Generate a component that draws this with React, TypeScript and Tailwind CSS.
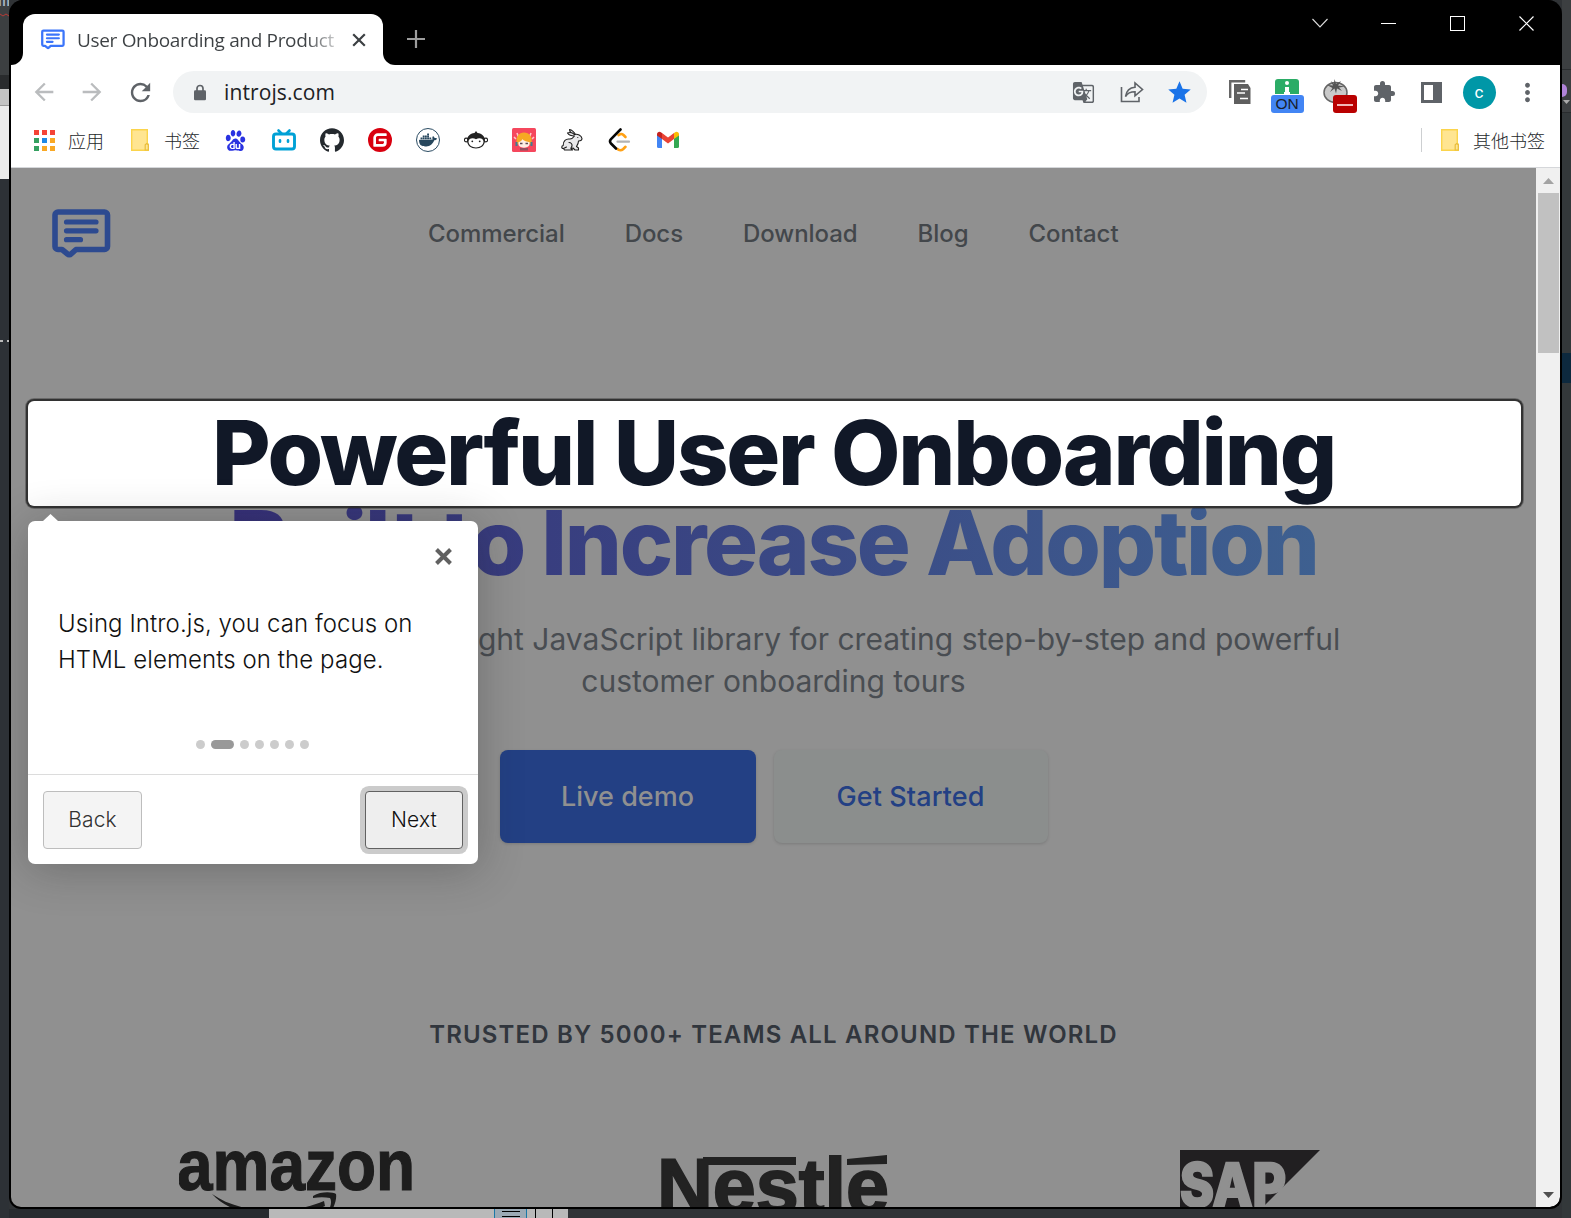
import React from 'react';
import { SiBaidu, SiGithub, SiGitee, SiDocker } from 'react-icons/si';
import { MdArrowBack, MdArrowForward, MdRefresh, MdGTranslate, MdStar, MdExtension, MdMoreVert } from 'react-icons/md';

const Logo = ({ className, color }: { className: string; color: string }) => (
  <svg viewBox="0 0 59 50" className={className} fill="none" stroke={color} strokeWidth="5.6" strokeLinecap="round" strokeLinejoin="round">
    <path d="M6 3h46.500a3 3 0 0 1 3 3v31.500a3 3 0 0 1-3 3H24l-5 4.500a2.500 2.500 0 0 1-3.500 0L10 40.500H6a3 3 0 0 1-3-3V6a3 3 0 0 1 3-3z" />
    <path strokeWidth="5.200" d="M14.500 13h29.500M14.500 21.800h29.500M14.500 30.700h14" />
  </svg>
);

const Folder = () => (
  <svg viewBox="0 0 18 22" className="h-[22px] w-[18px]">
    <path d="M.7.7h15.600v13.500l1 1v6.100H.7z" fill="#ffe591" stroke="#fbd44c" strokeWidth="1.400" />
    <path d="M14.200 21v-5.200l1.500-1.200 1.600 1.200V21z" fill="#ffe591" stroke="#e9bd3a" strokeWidth="1.200" />
  </svg>
);

const appColors = ['#f44336', '#f44336', '#f44336', '#34a060', '#1e88e5', '#f9a825', '#34a060', '#f9a825', '#f9a825'];

const Bili = () => (
  <svg viewBox="0 0 24 24" className="size-6" fill="none" stroke="#00a1d6" strokeWidth="2.900" strokeLinecap="round">
    <rect x="1.500" y="6" width="21" height="15" rx="2.500" />
    <path d="M6.500 2.500l3 3M17.500 2.500l-3 3M8 12.300v1.500M16 12.300v1.500" strokeWidth="2.600" />
  </svg>
);
const Monkey = () => (
  <svg viewBox="0 0 24 24" className="size-6">
    <circle cx="2.300" cy="12" r="1.900" fill="#fff" stroke="#222" strokeWidth="1.100" />
    <circle cx="21.700" cy="12" r="1.900" fill="#fff" stroke="#222" strokeWidth="1.100" />
    <path d="M12 3l1.500 2c4.500.4 7.500 3.500 7.500 7.500 0 5-4 8-9 8s-9-3-9-8C3 8.500 6 5.400 10.500 5z" fill="#222" />
    <path d="M12 11.300c2.500-2 7.500-1.500 7.500 2.300 0 3.900-3.800 5.900-7.500 5.900s-7.500-2-7.500-5.900c0-3.800 5-4.300 7.500-2.300z" fill="#fff" />
    <circle cx="8.300" cy="13.300" r=".9" fill="#222" /><circle cx="15.700" cy="13.300" r=".9" fill="#222" />
  </svg>
);
const Anime = () => (
  <svg viewBox="0 0 24 24" className="size-6">
    <rect width="24" height="24" rx="1.500" fill="#f5475d" />
    <path d="M5 5l1.500 4M19 5l-1.500 4M2 9l2 2M22 9l-2 2" stroke="#ffc4c8" strokeWidth="1.600" />
    <path d="M5 16C3 9 7 4.500 12 4.500s9.500 4.500 7 11.500z" fill="#f6a823" />
    <path d="M6.500 14c2 0 3.500-1.500 4-3 1 2 5 3 7 3v3c-2 3.500-9 3.500-11 0z" fill="#fdeee4" />
    <path d="M8 15.500h2.500M13.500 15.500H16" stroke="#5b4a52" strokeWidth="1.500" />
    <path d="M4.500 14v4M19.500 14v4" stroke="#3e7d90" strokeWidth="2" />
    <path d="M8 20h8v2.500H8z" fill="#94505f" />
  </svg>
);
const Bunny = () => (
  <svg viewBox="0 0 24 24" className="size-6" fill="#e8e8ea" stroke="#1c1c1c" strokeWidth="1.100" strokeLinejoin="round" strokeLinecap="round">
    <path d="M14.500 7.500C12 6 9.500 3.500 9.500 1.500c2.500.5 4.500 2.500 6 5" />
    <path d="M14.500 8C11 8 8.500 6.500 7.500 5c2.500-1 5.500 0 7 1.500 3-1 7 1 7.500 4 0 1.700-1.500 2.500-3.500 2.500 0 2.500-1 4-2 5.500l2 1.500v2h-3.500L13 20l-2 .5 1.500 1.500H4.500l-1-1.500c-2 .5-2.500-2.500-.3-3C3 13 6 10.500 9.500 11c2 .3 3.500-1 5-3z" />
    <path d="M9 14.500c2 0 3.300 1.500 3 3.500l-1 2M3.500 20.500l3-1.500" fill="none" />
    <circle cx="17.800" cy="9.500" r=".6" fill="#1c1c1c" stroke="none" />
  </svg>
);
const Leet = () => (
  <svg viewBox="0 0 24 24" className="size-6" fill="none" strokeWidth="2.600" strokeLinecap="round" strokeLinejoin="round">
    <path d="M10.500 7.200l1.500-.9c1.500-.6 2.500-.2 3.500.7l2 2M9.500 21c1.500 1.500 4 1.500 5.500.2l2.500-2.400" stroke="#ffa116" />
    <path d="M12.500 1.500L3 11.200c-1.200 1.300-1.200 3 0 4.300l5 5" stroke="#070706" />
    <path d="M9.500 13.700h11.500" stroke="#b3b3b3" strokeWidth="2.200" />
  </svg>
);
const Gmail = () => (
  <svg viewBox="0 0 24 24" className="size-6">
    <path d="M1 6v12.500a1.500 1.500 0 0 0 1.500 1.500H6V10z" fill="#4285f4" />
    <path d="M23 6v12.500a1.500 1.500 0 0 1-1.500 1.500H18V10z" fill="#34a853" />
    <path d="M1 6.500C1 4 3.500 3.200 5.200 4.400L6 5v6L1 7.500z" fill="#c5221f" />
    <path d="M23 6.500C23 4 20.500 3.200 18.800 4.400L18 5v6l5-3.500z" fill="#fbbc04" />
    <path d="M6 5l6 4.600L18 5v6l-6 4.500L6 11z" fill="#ea4335" />
  </svg>
);

const Slot = ({ children }: { children: React.ReactNode }) => <div className="flex w-12 shrink-0 items-center justify-center">{children}</div>;

const TabStrip = () => (
  <div className="flex h-[65px] shrink-0 items-start rounded-tr-[14px] bg-black">
    <div className="flex items-end pt-[14px]">
      <div className="size-3 bg-white"><div className="size-3 rounded-br-[12px] bg-black" /></div>
      <div className="flex h-[51px] w-[360px] items-center rounded-t-[12px] bg-white pl-[18px] pr-[17px]">
        <Logo className="h-[21px] w-6" color="#3b75fa" />
        <span className="ml-3 w-[259px] whitespace-nowrap bg-linear-to-r from-[#3c4043] from-88% to-[#3c404340] bg-clip-text pt-px font-['Open_Sans','Noto_Sans',sans-serif] text-[19px] tracking-[-0.330px] text-transparent">User Onboarding and Product</span>
        <svg viewBox="0 0 14 14" className="ml-[16px] size-[14px] shrink-0" stroke="#3c4043" strokeWidth="2.200"><path d="M1.200 1.200l11.600 11.600M12.800 1.200L1.200 12.800" /></svg>
      </div>
      <div className="size-3 bg-white"><div className="size-3 rounded-bl-[12px] bg-black" /></div>
    </div>
    <svg viewBox="0 0 18 18" className="ml-3 mt-[30px] size-[18px]" stroke="#9d9d9d" strokeWidth="2.200"><path d="M9 0v18M0 9h18" /></svg>
    <div className="-mr-px ml-auto flex h-[46px] text-white">
      <div className="flex w-[69px] items-center justify-center"><svg viewBox="0 0 16 10" className="h-[10px] w-4" fill="none" stroke="#ddd" strokeWidth="1.100"><path d="M.5 1L8 9l7.500-8" /></svg></div>
      <div className="flex w-[69px] items-center justify-center"><div className="h-px w-[15px] bg-white" /></div>
      <div className="flex w-[69px] items-center justify-center"><div className="size-[15px] border border-white" /></div>
      <div className="flex w-[69px] items-center justify-center"><svg viewBox="0 0 15 15" className="size-[15px]" stroke="#fff" strokeWidth="1.200"><path d="M.5.5l14 14M14.500.5l-14 14" /></svg></div>
    </div>
  </div>
);

const Toolbar = () => (
  <div className="flex h-[54px] shrink-0 items-center bg-white pl-[9px] text-[#5f6368]">
    <Slot><MdArrowBack className="size-[28px] text-[#babcbe]" /></Slot>
    <Slot><MdArrowForward className="size-[28px] text-[#babcbe]" /></Slot>
    <Slot><MdRefresh className="size-[29px]" /></Slot>
    <div className="ml-[9px] flex h-[42px] w-[1034px] items-center rounded-full bg-[#f1f3f4] pl-[21px] pr-1">
      <svg viewBox="0 0 12 17" className="h-[17px] w-3"><path d="M3 7V4.500a3 3 0 0 1 6 0V7" fill="none" stroke="#5f6368" strokeWidth="1.700" /><rect y="6.300" width="12" height="10" rx="1.300" fill="#5f6368" /></svg>
      <span className="ml-[18px] font-['Open_Sans','Noto_Sans',sans-serif] text-[21px] leading-none tracking-[0.100px] text-[#202124]">introjs.com</span>
      <div className="ml-auto flex">
        <Slot><MdGTranslate className="size-[23px]" /></Slot>
        <Slot><svg viewBox="0 0 24 22" className="ml-[2px] h-[22px] w-6" fill="none" stroke="#5f6368" strokeWidth="1.600"><path d="M1.500 6v14.500h17.500V16M5.500 15.500C6.500 9 10 6.500 15 6.200V2l7.500 6.500-7.500 6.300v-4.100c-4.500 0-7.500 1.300-9.500 4.800z" /></svg></Slot>
        <Slot><MdStar className="size-[27px] text-[#1a73e8]" /></Slot>
      </div>
    </div>
    <div className="ml-2 flex">
      <Slot><svg viewBox="0 0 22 24" className="ml-px h-6 w-[22px]"><path d="M1.200 18V1.200h15" fill="none" stroke="#666" strokeWidth="2.400" /><path d="M5 4h14l2.500 4v16H5z" fill="#5f5f5f" /><path d="M12 9.500h7M8 13h8M11 18.500h8" stroke="#fff" strokeWidth="1.700" /></svg></Slot>
      <Slot>
        <div className="mt-2 flex h-[34px] flex-col items-center">
          <div className="mb-px flex h-[15px] w-6 shrink-0 flex-col items-center rounded-t-[3px] bg-[#2bac66] pt-[2px]"><div className="size-[4px] rounded-full bg-white" /><div className="mt-[2px] h-[5px] w-1 bg-white" /><div className="h-[2px] w-[6px] bg-white" /></div>
          <div className="flex h-[18px] w-[33px] shrink-0 items-center justify-center rounded-[3px] bg-[#4285f4] font-['Liberation_Sans',sans-serif] text-[15.500px] leading-none text-[#18202c]">ON</div>
        </div>
      </Slot>
      <Slot>
        <div className="relative ml-[9px] mt-2 h-[34px] w-[34px]">
          <svg viewBox="0 0 26 24" className="h-6 w-[26px]"><ellipse cx="12.500" cy="13.500" rx="11.500" ry="10" fill="#c9c9c9" stroke="#666" strokeWidth="1.500" /><path d="M4 6l6 .5L8 2l3 3 .5-5L13 5l5-3-3 4.500 7 1-6 1 3 3.500-5-2.500-1 5-1.500-5L7 13l2.500-4z" fill="#555" /></svg>
          <div className="absolute bottom-0 right-0 flex h-[18px] w-6 items-center justify-center rounded-[3px] bg-[#b90000]"><div className="mt-[2px] h-[1.500px] w-4 bg-[#f1b8b8]" /></div>
        </div>
      </Slot>
      <Slot><MdExtension className="ml-px size-6" /></Slot>
      <Slot><div className="h-[21px] w-[21px] border-y-3 border-l-3 border-r-[9px] border-[#5f6368]" /></Slot>
      <Slot><div className="flex size-[33px] items-center justify-center rounded-full bg-[#0097a7] font-['Roboto',sans-serif] text-[17px] leading-none text-white">c</div></Slot>
      <Slot><MdMoreVert className="size-[29px]" /></Slot>
    </div>
  </div>
);

const Bookmarks = () => (
  <div className="flex h-[49px] shrink-0 items-center border-b border-[#d5d7da] bg-white pb-[6px] font-['Noto_Sans_CJK_SC',sans-serif] text-[18px] font-light text-[#25282b]">
    <div className="ml-[23px] grid grid-cols-3 gap-[3px]">{appColors.map((c, i) => <div key={i} className="size-[5px]" style={{ background: c }} />)}</div>
    <span className="ml-[13px] mt-px">应用</span>
    <div className="ml-[27px]"><Folder /></div>
    <span className="ml-[15px] mt-px">书签</span>
    <div className="ml-3 flex">
      <Slot><SiBaidu className="-ml-px size-[21px] text-[#2932e1]" /></Slot>
      <Slot><Bili /></Slot>
      <Slot><SiGithub className="size-6 text-[#24292e]" /></Slot>
      <Slot><SiGitee className="size-6 text-[#d9000f]" /></Slot>
      <Slot><div className="flex size-6 items-center justify-center rounded-full border-[1.500px] border-[#2b4c63]"><SiDocker className="size-[18px] text-[#27475d]" /></div></Slot>
      <Slot><Monkey /></Slot>
      <Slot><Anime /></Slot>
      <Slot><Bunny /></Slot>
      <Slot><Leet /></Slot>
      <Slot><Gmail /></Slot>
    </div>
    <div className="ml-auto mr-[19px] h-6 w-px bg-[#cdcfd1]" />
    <Folder />
    <span className="ml-[14px] mr-[15px] mt-px">其他书签</span>
  </div>
);

const Tooltip = () => (
  <div className="absolute left-[17px] top-[353px] z-20 flex h-[343px] w-[450px] flex-col rounded-[7px] bg-white shadow-[0_5px_45px_rgba(33,33,33,0.3)]">
    <div className="absolute -top-[7px] left-[15px] h-[7px] w-[15px] bg-white [clip-path:polygon(50%_0,100%_100%,0_100%)]" />
    <div className="flex h-[82px] justify-end pr-[26px] pt-[27px]">
      <svg viewBox="0 0 17 17" className="size-[17px]" stroke="#616161" strokeWidth="4"><path d="M1.500 1.500l14 14M15.500 1.500l-14 14" /></svg>
    </div>
    <div className="whitespace-pre px-[30px] pt-[3px] text-[24px] font-light leading-[36px] tracking-[0.080px] text-[#111]">{'Using Intro.js, you can focus on\nHTML elements on the page.'}</div>
    <div className="mt-auto flex h-[60px] items-start justify-center gap-[6px] pr-px pt-[26px]">
      <i className="size-[9px] rounded-full bg-[#ccc]" />
      <i className="h-[9px] w-[23px] rounded-full bg-[#999]" />
      {[0, 1, 2, 3, 4].map((i) => <i key={i} className="size-[9px] rounded-full bg-[#ccc]" />)}
    </div>
    <div className="flex h-[90px] items-start justify-between border-t border-[#dcdcdc] px-[15px] pt-4 text-[21px] font-[350] tracking-[0.150px] [text-shadow:1.500px_1.500px_0_#fff]">
      <div className="flex h-[58px] w-[99px] items-center justify-center rounded-[4px] border border-[#bdbdbd] bg-[#f4f4f4] text-[#333]">Back</div>
      <div className="flex h-[58px] w-[98px] items-center justify-center rounded-[4px] border border-[#616161] bg-[#eee] text-[#111] shadow-[0_0_0_5px_#cbcbcb]">Next</div>
    </div>
  </div>
);

const Page = () => (
  <div className="relative h-full w-[1525px] overflow-hidden bg-[#909090] font-['Inter',sans-serif]">
    <header className="flex h-[233px] items-start pl-[41px] pt-[41px]">
      <Logo className="h-[50px] w-[59px]" color="#2d4a90" />
      <nav className="ml-[317px] flex h-[50px] items-center gap-[60px] text-[24px] font-medium tracking-[-0.060px] text-[#43474b]">
        <span>Commercial</span><span>Docs</span><span>Download</span><span>Blog</span><span>Contact</span>
      </nav>
    </header>
    <h1 className="text-center text-[90px] font-extrabold leading-[90px] tracking-[-0.025em]">
      <span className="relative z-10 ml-[17px] block h-[105px] w-[1493px] rounded-[6px] bg-white pr-[2px] pt-[7px] text-[#111827] shadow-[0_0_0_2px_rgba(44,44,44,0.900),0_0_0_3px_rgba(33,33,33,0.350)]">Powerful User Onboarding</span>
      <span className="mx-auto -mt-[8px] block h-[90px] w-fit bg-linear-to-r from-[#352f78] to-[#3e6090] bg-clip-text text-transparent">Built to Increase Adoption</span>
    </h1>
    <p className="mt-[30px] whitespace-pre text-center text-[30px] leading-[42px] text-[#494d52]">{'Intro.js is a lightweight JavaScript library for creating step-by-step and powerful\ncustomer onboarding tours'}</p>
    <div className="mt-[48px] flex justify-center gap-[18px] text-[27px] font-medium">
      <div className="flex h-[93px] w-[256px] items-center justify-center rounded-[8px] bg-[#234084] pt-[2px] text-[#909090] shadow-[0_1px_3px_rgba(0,0,0,0.15)]">Live demo</div>
      <div className="flex h-[93px] w-[274px] items-center justify-center rounded-[8px] bg-[#8b8e8d] pt-[2px] tracking-[0.100px] text-[#234084] shadow-[0_1px_3px_rgba(0,0,0,0.15)]">Get Started</div>
    </div>
    <p className="mt-[174px] text-center text-[24px] font-semibold leading-[36px] tracking-[1.160px] text-[#31363d]">TRUSTED BY 5000+ TEAMS ALL AROUND THE WORLD</p>
    <div className="mt-[74px] flex h-[80px] items-start">
      <svg viewBox="0 0 236 80" className="ml-[168px] h-20 w-[236px] shrink-0" fill="#1d1d1d">
        <text x="-2" y="63" fontFamily="Liberation Sans" fontWeight="700" fontSize="73" textLength="238" lengthAdjust="spacingAndGlyphs" stroke="#1d1d1d" strokeWidth="1.200">amazon</text>
        <path d="M33 67c28 20 77 22 112 7l1 5c-38 18-90 13-113-12z" />
        <path d="M134 69c8-5 20-4 23-2 1 5-2 14-6 19l-2-1c3-6 4-11 2-14-5-1-11-1-17 0z" />
      </svg>
      <svg viewBox="0 0 228 80" className="ml-[246px] h-20 w-[228px] shrink-0" fill="#222">
        <defs><clipPath id="accent"><path d="M0 0h183v90H0zM183 43h45v50h-45z" /></clipPath></defs>
        <text clipPath="url(#accent)" x="-4" y="86" fontFamily="Liberation Sans" fontWeight="700" fontSize="78" textLength="232" lengthAdjust="spacingAndGlyphs" stroke="#222" strokeWidth="1.800">Nestlé</text>
        <path d="M42 30h93v8H42zM186 32l40-4v9l-40 1z" />
      </svg>
      <svg viewBox="0 0 140 80" className="ml-[291px] h-20 w-[140px] shrink-0">
        <path d="M0 23h140L60 103H0z" fill="#211f21" />
        <text x="0" y="79" fontFamily="Inter" fontWeight="800" fontSize="59" textLength="106" lengthAdjust="spacingAndGlyphs" fill="#909090" stroke="#909090" strokeWidth="2.500">SAP</text>
      </svg>
    </div>
    <Tooltip />
  </div>
);

export default function App() {
  return (
    <div className="flex h-[1218px] w-[1571px] overflow-hidden bg-[#303336]">
      <div className="h-full w-[9px] shrink-0 overflow-hidden bg-[#2d3136]">
        <div className="relative h-[75px] bg-[#3c3f41]">
          <span className="absolute -left-[2px] -top-[9px] font-['Liberation_Mono',monospace] text-[20px] leading-none text-[#a9b7c6]">m</span>
          <svg viewBox="0 0 9 4" className="absolute top-[13px] h-1 w-[9px]" fill="none" stroke="#b83a36"><path d="M0 1l3 2 3-2 3 2" /></svg>
        </div>
        <div className="h-[14px] bg-[#292b2d]" />
        <div className="h-[17px] border-b border-[#999] bg-[#c4c4c4]" />
        <div className="h-[73px] bg-[#ebebeb]" />
        <div className="mt-[161px] flex gap-1"><i className="h-[2px] w-1 bg-[#bbb]" /><i className="h-[2px] w-1 bg-[#bbb]" /></div>
      </div>
      <div className="flex h-full w-[1553px] shrink-0 flex-col">
        <div className="flex h-[1209px] shrink-0 flex-col overflow-hidden rounded-b-[12px] rounded-t-[14px] border-x-2 border-b-2 border-black bg-black">
          <TabStrip />
          <Toolbar />
          <Bookmarks />
          <div className="flex min-h-0 flex-1">
            <Page />
            <div className="flex w-6 flex-col items-center rounded-br-[10px] bg-[#f0f0f0]">
              <div className="ml-px mt-[10px] h-[6px] w-[11px] bg-[#a3a3a3] [clip-path:polygon(50%_0,100%_100%,0_100%)]" />
              <div className="mt-[9px] h-[160px] w-[21px] bg-[#c1c1c1]" />
              <div className="mb-[9px] ml-px mt-auto h-[6px] w-[11px] bg-[#505050] [clip-path:polygon(0_0,100%_0,50%_100%)]" />
            </div>
          </div>
        </div>
        <div className="flex h-[9px] bg-[#303336]">
          <div className="w-[260px] bg-[#272b2f]" />
          <div className="flex w-[299px] bg-[#b9b9b9] pl-[225px]">
            <div className="flex w-[33px] flex-col items-center gap-1 border-x border-[#1b78a8] bg-[#9caab5] pt-[2px]"><i className="h-px w-[18px] bg-black" /><i className="h-px w-[18px] bg-black" /></div>
            <div className="ml-2 w-[18px] border-x border-black" />
          </div>
        </div>
      </div>
      <div className="h-full w-[9px] bg-[#33383a]">
        <div className="h-[70px] border-b border-[#292c2e] bg-[#3c3f41]" />
        <div className="flex h-[43px] flex-col items-center border-b border-[#292c2e] bg-[#3c3f41] pt-[14px]">
          <div className="h-[13px] w-[5px] self-start rounded-r-full bg-[#b184d9]" />
          <div className="mt-[3px] h-1 w-[7px] bg-[#aaa] [clip-path:polygon(0_0,100%_0,50%_100%)]" />
        </div>
        <div className="mt-[240px] h-[30px] bg-[#0d293e]" />
      </div>
    </div>
  );
}
